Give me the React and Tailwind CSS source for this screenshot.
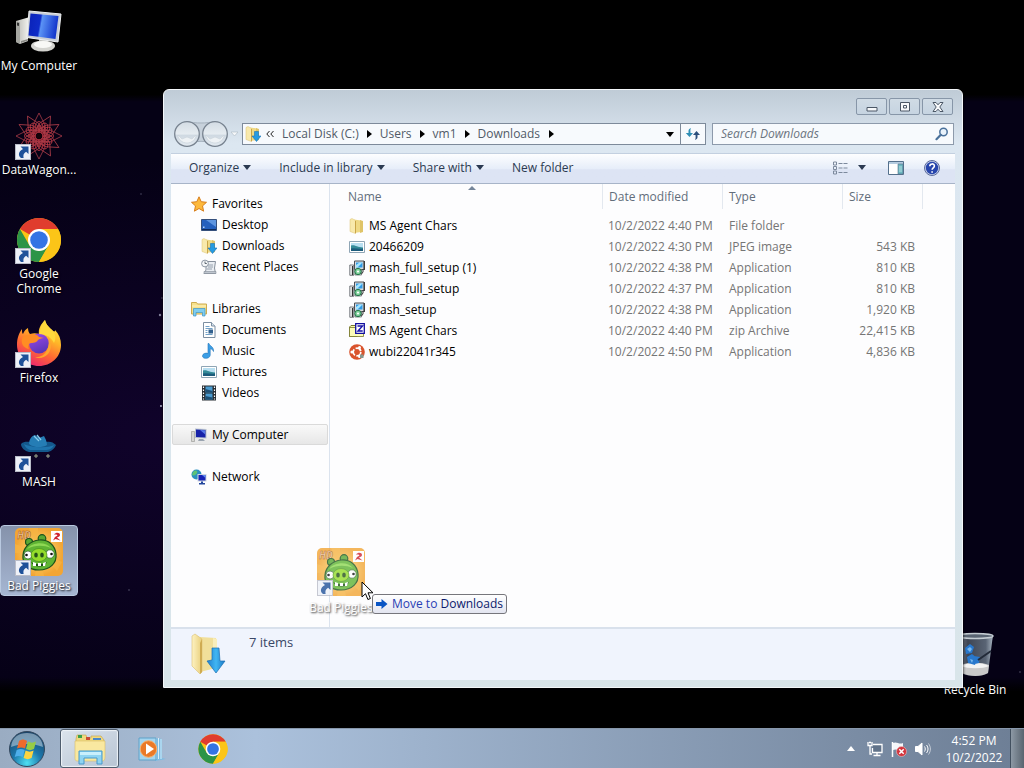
import React from "react";

const svgBase = { "aria-hidden": true, focusable: "false" };

/* ---------- Shared icon parts ---------- */

function ShortcutArrow() {
  return (
    <svg {...svgBase} viewBox="0 0 16 16" className="absolute bottom-0 left-0 h-4 w-4">
      <rect x="0.5" y="0.5" width="15" height="15" fill="#eef1f8" stroke="#b9bcc8" />
      <path d="M5.500 2.500h8V10l-2.400-2.200C8.600 9.300 8 11.200 8.600 14H6C2.800 11.500 3.300 7 8 4.900Z" fill="#1f5199" />
    </svg>
  );
}

function ChromeLogo({ className }) {
  return (
    <svg {...svgBase} viewBox="0 0 48 48" className={className}>
      <circle cx="24" cy="24" r="22" fill="#f9c416" />
      <path d="M24 24 4.950 13A22 22 0 0 1 43.050 13H24Z" fill="#e03c2e" />
      <path d="M4.950 13A22 22 0 0 0 24 46L33.500 29.500 24 35 14.500 29.500Z" fill="#2c9447" />
      <path d="M24 46A22 22 0 0 0 43.050 13H24L33.500 29.500Z" fill="#fbc518" />
      <circle cx="24" cy="24" r="11" fill="#fff" />
      <circle cx="24" cy="24" r="8.800" fill="#3474e4" />
    </svg>
  );
}

function ComputerIcon({ className }) {
  return (
    <svg {...svgBase} viewBox="0 0 48 48" className={className}>
      <defs>
        <linearGradient id="screenBlue" x1="0" y1="0" x2="1" y2="0.150">
          <stop offset="0" stopColor="#0a22b8" />
          <stop offset="0.420" stopColor="#0f2cc8" />
          <stop offset="0.480" stopColor="#5b93f5" />
          <stop offset="1" stopColor="#1437cc" />
        </linearGradient>
        <linearGradient id="caseGrey">
          <stop offset="0" stopColor="#b9b9b4" />
          <stop offset="1" stopColor="#efefeb" />
        </linearGradient>
      </defs>
      <path d="M1 13 13 9.500V33L5 36 1 34Z" fill="url(#caseGrey)" />
      <path d="M1 13 5 14.500V36L1 34Z" fill="#a5a6a1" />
      <path d="M2 14.500l2 .5v3l-2-.5z" fill="#333" />
      <path d="M6 33l7-2v1.500l-7 2.500z" fill="#8a8b86" />
      <path d="M24 31h8l1 6h-9z" fill="#b9bab6" />
      <ellipse cx="28" cy="38" rx="12" ry="5.500" fill="#d4d4d0" />
      <ellipse cx="28" cy="36.500" rx="9" ry="3.500" fill="#f8f8f6" />
      <path d="M14 3 46 6 43 34 12 29.500Z" fill="#c9ced6" stroke="#eef0f2" />
      <path d="M15.500 5.500 43.500 8 40.500 31 13.500 27.500Z" fill="url(#screenBlue)" />
    </svg>
  );
}

function SpiroIcon({ className }) {
  const turns = Array.from({ length: 12 }, (_, i) => i * 30);
  return (
    <svg {...svgBase} viewBox="0 0 48 48" className={className}>
      <g fill="none" stroke="#a83a47" strokeWidth="0.800">
        {turns.map((a) => (
          <g key={a} transform={`rotate(${a} 24 24)`}>
            <path d="M24 1 30.500 14 13 23.500" />
            <path d="M24 1 17.500 14 35 23.500" />
            <ellipse cx="24" cy="15" rx="3.800" ry="5.500" stroke="#c53a46" />
            <path d="M24 12c4 4 3 8-1 7s-3-5 2-5" stroke="#8c2632" />
          </g>
        ))}
      </g>
      <circle cx="24" cy="24" r="3" fill="#120208" />
    </svg>
  );
}

function FirefoxIcon({ className }) {
  return (
    <svg {...svgBase} viewBox="0 0 48 48" className={className}>
      <defs>
        <linearGradient id="foxBody" x1="0.800" y1="0" x2="0.300" y2="1">
          <stop offset="0" stopColor="#fff04a" />
          <stop offset="0.350" stopColor="#ffb728" />
          <stop offset="0.650" stopColor="#ff6a32" />
          <stop offset="1" stopColor="#ec2270" />
        </linearGradient>
        <linearGradient id="foxGlobe" x1="0.300" y1="0" x2="0.700" y2="1">
          <stop offset="0" stopColor="#9a48e8" />
          <stop offset="1" stopColor="#5635b3" />
        </linearGradient>
      </defs>
      <path d="M30 0c1 5 5 8 8 11 2 1 2 0 2-1 4 4 6 9 6 15 0 12-10 21-22 21S2 37 2 25C2 18 4 13 7 9c0 3 0 4 1 5 1-3 3-5 5-6 0 3 1 5 2 6 3-1 6-1 9 0C23 9 26 4 30 0Z" fill="url(#foxBody)" />
      <circle cx="24" cy="23.500" r="10" fill="url(#foxGlobe)" />
      <path d="M24 14c2-8 4-11 6-14 1 5 5 8 8 11 3 4 3 8 1 12-2-5-8-9-15-9Z" fill="#ffd93c" />
      <path d="M12 15c5-2 10-1 12 2l5 1c-3 0-5 1-6 2-2 4-7 2-9 4-1 2-1 3 0 5-6-1-8-6-7-10 1-3 3-3 5-4Z" fill="#ff8d24" />
      <path d="M33 16c4 5 4 13 0 18-4 4-9 5-13 3 10 1 16-9 13-21Z" fill="#ffa52e" />
    </svg>
  );
}

function HatIcon({ className }) {
  return (
    <svg {...svgBase} viewBox="0 0 48 48" className={className}>
      <path d="M6 20c3-3 7-2 9-2h16c4-1 7 0 10 3-1 3-4 6-8 7H14c-4-1-8-4-8-8Z" fill="#14588c" />
      <path d="M9 20c5 3 23 5 30 1-2 4-5 5-9 5H15c-3-1-5-3-6-6Z" fill="#1f75ae" />
      <path d="M14 20c0-4 2-8 6-9l4 3 5-2c1 2 3 5 3 9-5 3-13 3-18-1Z" fill="#257db5" />
      <path d="M19 12l5 5M22 11l4 5" stroke="#8accea" strokeWidth="1.300" />
      <path d="M21 30v4M33 30v4M19 32h4M31 32h4" stroke="#9da88e" strokeWidth="1" />
    </svg>
  );
}

function PigIcon({ className }) {
  return (
    <svg {...svgBase} viewBox="0 0 48 48" className={className}>
      <defs>
        <radialGradient id="pigBack">
          <stop offset="0" stopColor="#ffe282" />
          <stop offset="1" stopColor="#f2a534" />
        </radialGradient>
      </defs>
      <rect width="48" height="48" rx="5" fill="url(#pigBack)" />
      <path d="M24 24 0 16v9zM24 24 14 0h9zM24 24 47 34l-5 9zM24 24 29 48h-9z" fill="#f7b545" opacity="0.700" />
      <text x="2" y="11" fontSize="10" fontWeight="700" fontStyle="italic" fill="#f6cfa0" stroke="#9a5520" strokeWidth="0.500">HD</text>
      <g stroke="#1c531c" strokeWidth="1.200">
        <circle cx="14" cy="14" r="3.500" fill="#59a832" />
        <circle cx="27" cy="10.500" r="3.800" fill="#59a832" />
        <path d="M24 12c9-1 16 5 17 14 1 9-6 16-17 16S7 35 8 27c1-9 8-14 16-15Z" fill="#5fb434" />
      </g>
      <path d="M12 21c5-7 19-8 24-1-8-3-16-3-24 1Z" fill="#8ed854" />
      <circle cx="13" cy="27" r="4" fill="#fff" stroke="#285c20" strokeWidth="0.700" />
      <circle cx="35" cy="26" r="4.200" fill="#fff" stroke="#285c20" strokeWidth="0.700" />
      <circle cx="11.500" cy="27" r="1.300" fill="#111" />
      <circle cx="36.500" cy="26" r="1.300" fill="#111" />
      <ellipse cx="24" cy="27" rx="8" ry="6.500" fill="#93dc2a" stroke="#4b8f20" strokeWidth="0.700" />
      <ellipse cx="21" cy="27" rx="1.800" ry="2.600" fill="#24501a" />
      <ellipse cx="27" cy="27" rx="1.800" ry="2.600" fill="#24501a" />
      <path d="M16 34c5 3 11 3 16 0-2 6-13 6-16 0Z" fill="#1c4a18" />
      <path d="m18 34 3 1v3h-3zm5 1h3v3h-3zm5 0 3-1-1 4h-2z" fill="#fff" />
      <rect x="36" y="3" width="11" height="11" fill="#fff" />
      <path d="M39 6.500C41 4 45 4.500 45 7c0 1.500-2 2-3 2.500l3.500 3-5-1.500-2.500 1.500 2-3.500 2.500-1.500-1-1z" fill="#cf2530" />
    </svg>
  );
}

function RecycleIcon({ className }) {
  return (
    <svg {...svgBase} viewBox="0 0 48 48" className={className}>
      <defs>
        <linearGradient id="binSide">
          <stop offset="0" stopColor="#8d97a5" />
          <stop offset="0.300" stopColor="#3e4553" />
          <stop offset="0.800" stopColor="#596474" />
          <stop offset="1" stopColor="#a8b4c0" />
        </linearGradient>
      </defs>
      <path d="M6 3h36l-5 38c-7 4-20 4-27 0Z" fill="url(#binSide)" />
      <path d="M10 33c7-3 21-3 28 0l-1 8c-6 4-19 4-26 0Z" fill="#c9c9c9" />
      <path d="M10 34c7-4 21-4 28 0-6 3-21 3-28 0Z" fill="#f3f3f3" />
      <path d="m14 16 5-4 4 3-2 6-6 1zM16 25l5-3 5 4-2 7-7-2zM23 24l6 1-1 6-4 1z" fill="#2878cd" />
      <path d="m16 17 3-2 2 2-2 3zM19 27l3 1-1 3z" fill="#7ab9ee" />
      <path d="M40 19 27 28" stroke="#232b39" strokeWidth="2" />
      <ellipse cx="24" cy="4" rx="18" ry="2.500" fill="#5a6573" stroke="#c4ccd2" strokeWidth="1.500" />
    </svg>
  );
}

/* ---------- 16px icons ---------- */

function FolderArt() {
  return (
    <>
      <path d="M5 1.500 12 2.500V14l-7 1Z" fill="#efd985" />
      <path d="M11 2l3 1v11l-3 1z" fill="#dfc468" />
      <path d="M1 1.500 3 .5 6.500 2.500V15.500L1 13.500Z" fill="#f8e9ac" stroke="#dcc273" strokeWidth="0.500" />
      <path d="M6 3h1v12L6 15.500z" fill="#c9a548" />
    </>
  );
}

function DownArrowArt() {
  return <path d="M9.500 5.500h4V10H16l-4.500 5.500L7 10h2.500Z" fill="#269be2" stroke="#1973b5" strokeWidth="0.600" />;
}

function MonitorArt() {
  return (
    <>
      <path d="M.5 4.500h3v10h-3z" fill="#d8d8d4" stroke="#92928e" strokeWidth="0.600" />
      <path d="M4 1.500 15.500 2v9.500L4 11Z" fill="#bac4d0" />
      <path d="M5 2.500 14.500 3v7.500L5 10Z" fill="#1722a8" />
      <path d="M9 3 14 3.300v4z" fill="#5778e8" />
      <path d="M8 12h4l2 2H7z" fill="#9aa4b0" />
    </>
  );
}

function InstallerArt() {
  return (
    <>
      <path d="M5.500 1h9.500v8.500H5.500z" fill="#d9dcde" stroke="#4b5056" />
      <path d="M7 2.500h6.500v5H7z" fill="#2f9ae6" />
      <path d="m7 5 3.500-2.500h3L8.500 7.500H7z" fill="#a3e6ff" />
      <path d="M.8 5h4v10.300h-4z" fill="#f1f3f3" stroke="#565b60" strokeWidth="0.800" />
      <path d="M3.500 6v9" stroke="#333" strokeWidth="1.200" />
      <path d="M6 9.500h6.500v5.500H6z" fill="#dfe3e3" stroke="#565b60" strokeWidth="0.700" />
      <circle cx="9" cy="11.500" r="3.200" fill="#7fd09a" stroke="#24774a" />
      <circle cx="9" cy="11.500" r="1.100" fill="#fff" />
      <path d="M14 9.500v2.500l-1.500 2" stroke="#333" fill="none" />
      <path d="M15.300 1v9" stroke="#222" />
    </>
  );
}

function PictureArt() {
  return (
    <>
      <path d="M.5 2.500h15v11H.5z" fill="#fff" stroke="#8fa5b5" />
      <path d="M2 4h12v8H2z" fill="#b9dff1" />
      <path d="M2 6.500c4-1 6 2 12 2v3.500H2z" fill="#348b98" />
      <path d="M2 9.500c4-1 8 1 12 0v2.500H2z" fill="#1c5c7c" />
    </>
  );
}

const smallArt = {
  star: (
    <path d="m8 .8 2.200 4.900 5.300.6-4 3.600 1.100 5.300L8 12.500l-4.600 2.700 1.100-5.300-4-3.600 5.300-.6Z" fill="#fdb93c" stroke="#d77e1c" />
  ),
  desktop: (
    <>
      <path d="M.5 2.500h15v11H.5z" fill="#2460bd" stroke="#35507c" />
      <path d="M5 3h10v7z" fill="#5e95df" />
      <path d="M1 12h14v1H1z" fill="#0f2c5c" />
      <path d="M2 9.500h1.500v1.500H2z" fill="#b6d2f5" />
    </>
  ),
  folder: <FolderArt />,
  downloads: (
    <>
      <FolderArt />
      <DownArrowArt />
    </>
  ),
  recent: (
    <>
      <path d="M5 2.500h9.500L13.500 9l1 5.500H3L5 11Z" fill="#e9edf2" stroke="#87909c" />
      <path d="M7 6h5M7 8h5M6 10h5" stroke="#98a2ae" />
      <circle cx="4" cy="4.500" r="3.400" fill="#f5f7f9" stroke="#8c96a2" />
      <path d="M4 2.500v2h1.800" stroke="#5c6772" fill="none" />
      <path d="M3 12.500h12v2H3z" fill="#bfc6cf" stroke="#848d99" strokeWidth="0.600" />
    </>
  ),
  libraries: (
    <>
      <path d="M.5 1.500h5l1 1.500h9v10H.5z" fill="#f6e18c" stroke="#cdab50" />
      <path d="M1 5h14" stroke="#fff3bf" />
      <path d="M2.500 7.500h11.500v7.500h-2.500v-3.500H5V15H2.500z" fill="#7fcdf0" stroke="#3d93c6" strokeWidth="0.700" />
    </>
  ),
  documents: (
    <>
      <path d="M2.500.5h8l3.500 3.500v11.500H2.500z" fill="#fff" stroke="#7c8ea1" />
      <path d="M10.500.5V4H14" fill="#d8e4ef" stroke="#7c8ea1" />
      <path d="M4.500 4.500h4M4.500 6.500h7M4.500 8.500h2M4.500 10.500h2M4.500 12.500h7" stroke="#71a0c7" />
      <path d="M7.500 7.500h4.500v4H7.500z" fill="#32618f" />
    </>
  ),
  music: (
    <path d="M8 .5c1 3 5 3 4.500 8-.7-2-2-2.500-3.300-2.700V12c0 4-7.700 4.500-7.700 1 0-2.500 3.500-3.500 5.500-2.500V.5Z" fill="#3c9fe6" stroke="#2273b8" strokeWidth="0.600" />
  ),
  pictures: <PictureArt />,
  videos: (
    <>
      <path d="M1 .5h14v15H1z" fill="#272d33" />
      <path d="M4.500 1.500h7v6h-7zM4.500 8.500h7v6h-7z" fill="#4b9bd0" />
      <path d="m4.500 4 7 2v1.500h-7zM4.500 11l7 1.500v2h-7z" fill="#1d4f74" />
      <path d="M2.500 1.500v13M13.500 1.500v13" stroke="#fff" strokeWidth="1.200" strokeDasharray="1.500 1.500" />
    </>
  ),
  computer: <MonitorArt />,
  network: (
    <>
      <circle cx="5.500" cy="5.500" r="5" fill="#2a8fc0" />
      <path d="M2 3c3-3 5-1 4 1S3 7 1 6zM7 7l3-2v4l-3 2z" fill="#5cc275" />
      <path d="M6.500 5h9v7.500h-9z" fill="#cdd5e0" />
      <path d="M7.500 6h7v5.500h-7z" fill="#1722b5" />
      <path d="m11 6 3.500 0v3z" fill="#5f88ef" />
      <path d="M10 12.500h2V14h2v1.500H8V14h2z" fill="#22469c" />
    </>
  ),
  installer: <InstallerArt />,
  zip: (
    <>
      <path d="M.5 4 2 2.500h4.500L8 4v9.500H.5z" fill="#fbfba6" stroke="#77772e" />
      <path d="M.5 4.500h14v9H.5z" fill="#fbfbb8" stroke="#77772e" strokeWidth="0.800" />
      <path d="M6.700.7h8.600v9.600H6.700z" fill="#fff" stroke="#120fa0" strokeWidth="1.300" />
      <path d="M8.500 3h5l-4.500 5h4.700" fill="none" stroke="#1712a8" strokeWidth="1.400" />
    </>
  ),
  ubuntu: (
    <>
      <circle cx="8" cy="8" r="7.800" fill="#d9532c" />
      <circle cx="8" cy="8" r="3.800" fill="none" stroke="#fff" strokeWidth="1.700" strokeDasharray="6.500 1.500" />
      <circle cx="2.900" cy="8" r="1.500" fill="#fff" />
      <circle cx="10.500" cy="3.500" r="1.500" fill="#fff" />
      <circle cx="10.500" cy="12.500" r="1.500" fill="#fff" />
      <path d="M11 10.500h3.500v3.500H11z" fill="#87988f" />
    </>
  ),
};

function SmallIcon({ name }) {
  return (
    <svg {...svgBase} viewBox="0 0 16 16" className="h-4 w-4 shrink-0">
      {smallArt[name]}
    </svg>
  );
}

function DownCaret({ className = "" }) {
  return (
    <svg {...svgBase} viewBox="0 0 8 5" className={`h-[5px] w-2 shrink-0 ${className}`}>
      <path d="M0 0h8L4 5Z" fill="currentColor" />
    </svg>
  );
}

function RightCaret() {
  return (
    <svg {...svgBase} viewBox="0 0 5 8" className="h-2 w-[5px] shrink-0 text-black">
      <path d="M0 0v8l5-4Z" fill="currentColor" />
    </svg>
  );
}

/* ---------- Desktop ---------- */

const shortcuts = [
  { label: "My Computer", Icon: ComputerIcon },
  { label: "DataWagon...", Icon: SpiroIcon, link: true },
  { label: "Google Chrome", Icon: ChromeLogo, link: true },
  { label: "Firefox", Icon: FirefoxIcon, link: true },
  { label: "MASH", Icon: HatIcon, link: true },
  { label: "Bad Piggies", Icon: PigIcon, link: true, selected: true },
];

function DesktopIcon({ label, Icon, link, selected }) {
  return (
    <button
      type="button"
      className={`flex w-[78px] flex-col items-center rounded-sm border pt-0.5 pb-0.5 text-white ${
        selected ? "border-[#b9c9e0] bg-linear-to-b from-[#8592ab] to-[#a6b6d2]" : "border-transparent"
      }`}
    >
      <span className="relative block">
        <Icon className="h-12 w-12" />
        {link && <ShortcutArrow />}
      </span>
      <span className="mt-0.5 text-center leading-[15px] whitespace-nowrap [text-shadow:1px_1px_2px_#000]">
        {label === "Google Chrome" ? <>Google<br />Chrome</> : label}
      </span>
    </button>
  );
}

const stars = [
  [160, 315, 1.2, 0.6],
  [161, 406, 1, 0.9],
  [162, 298, 0.8, 0.4],
  [129, 590, 0.8, 0.4],
  [141, 194, 0.8, 0.35],
  [1020, 672, 0.8, 0.4],
];

function Stars() {
  return (
    <svg {...svgBase} className="pointer-events-none absolute inset-0 h-full w-full">
      {stars.map(([x, y, r, o]) => (
        <circle key={`${x}-${y}`} cx={x} cy={y} r={r} fill="#cfd4ea" opacity={o} />
      ))}
    </svg>
  );
}

/* ---------- Explorer window ---------- */

function CaptionButton({ label, children }) {
  return (
    <button
      type="button"
      aria-label={label}
      className="flex h-[17px] w-[31px] items-center justify-center rounded-[2px] border border-[#8796a8] bg-linear-to-b from-[#d0dbe5] to-[#c6d4e1]"
    >
      <svg {...svgBase} viewBox="0 0 12 10" className="h-2.5 w-3" fill="#f7f9fb" stroke="#4b5766">
        {children}
      </svg>
    </button>
  );
}

function NavCircles() {
  return (
    <svg {...svgBase} viewBox="0 0 64 28" className="h-7 w-16 shrink-0">
      <defs>
        <linearGradient id="navDisc" x1="0" y1="0" x2="0" y2="1">
          <stop offset="0" stopColor="#d3dce4" />
          <stop offset="0.500" stopColor="#e6ecf1" />
          <stop offset="0.550" stopColor="#cfd9e2" />
          <stop offset="1" stopColor="#e3eaf1" />
        </linearGradient>
      </defs>
      <path d="M13 1.500c8 2 20 2 28 0v25c-8-7-20-7-28 0Z" fill="#c7d1db" stroke="#a4b0bc" />
      <circle cx="13" cy="14" r="12.300" fill="url(#navDisc)" stroke="#77828f" strokeWidth="1.300" />
      <circle cx="41" cy="14" r="12.300" fill="url(#navDisc)" stroke="#77828f" strokeWidth="1.300" />
      <path d="M4 15l4 4 5-2 5 2 4-4c0 4-4 8-9 8s-9-4-9-8ZM32 15l4 4 5-2 5 2 4-4c0 4-4 8-9 8s-9-4-9-8Z" fill="#eef2f5" stroke="#c3ccd5" strokeWidth="0.500" />
      <path d="M57 12h7l-3.500 4Z" fill="#f6f8fa" stroke="#adb8c4" strokeWidth="0.600" />
    </svg>
  );
}

const crumbs = ["Local Disk (C:)", "Users", "vm1", "Downloads"];

function AddressRow() {
  return (
    <div className="flex items-center pr-px">
      <div className="flex h-7 shrink-0 items-center pl-[3px]">
        <NavCircles />
      </div>
      <div className="ml-1 flex h-[22px] min-w-0 flex-1 items-center border border-[#7d8a9a] bg-[#f7fafd] text-[#515b67]">
        <nav aria-label="Address" className="flex min-w-0 flex-1 items-center pl-0.5">
          <SmallIcon name="downloads" />
          <button type="button" aria-label="Parent folders" className="mr-2 ml-[5px]">
            <svg {...svgBase} viewBox="0 0 8 6" className="h-1.5 w-2" fill="none" stroke="#222">
              <path d="M3.500 0 .8 3l2.700 3M7.500 0 4.800 3l2.700 3" />
            </svg>
          </button>
          {crumbs.map((c) => (
            <span key={c} className="flex items-center">
              <button type="button" className="mr-[7px] whitespace-nowrap">
                {c}
              </button>
              <span className="mr-1.5 flex w-2 items-center justify-center">
                <RightCaret />
              </span>
            </span>
          ))}
        </nav>
        <button type="button" aria-label="Recent addresses" className="flex h-full w-5 items-center justify-center text-black">
          <DownCaret />
        </button>
        <button type="button" aria-label="Refresh" className="flex h-full w-[25px] items-center justify-center border-l border-[#7d8a9a]">
          <svg {...svgBase} viewBox="0 0 16 14" className="h-3.5 w-4">
            <path d="M6 1C3 2 3.500 4 3.500 6H.8L4.500 10 8 6H5.500C5.500 4 5 3 6 1Z" fill="#2f8fb5" />
            <path d="M10 13c3-1 2.500-3 2.500-5H15l-3.500-4L8 8h2.500c0 2 .5 3-.5 5Z" fill="#2c4f7c" />
          </svg>
        </button>
      </div>
      <div className="ml-1.5 flex h-[22px] w-[242px] items-center border border-[#8d9aab] bg-[#f7fafd] pr-1 pl-2">
        <input
          type="search"
          aria-label="Search Downloads"
          placeholder="Search Downloads"
          className="min-w-0 flex-1 bg-transparent italic outline-none placeholder:text-[#6b7480]"
        />
        <svg {...svgBase} viewBox="0 0 14 14" className="h-3.5 w-3.5 shrink-0" fill="none">
          <circle cx="8.500" cy="5" r="3.700" fill="#e8f2fb" stroke="#4a719b" strokeWidth="1.500" />
          <path d="M5.800 7.800 1.500 12.200" stroke="#4a719b" strokeWidth="2.200" strokeLinecap="round" />
        </svg>
      </div>
    </div>
  );
}

function ToolButton({ children, menu }) {
  return (
    <button type="button" className="flex items-center gap-1 whitespace-nowrap">
      {children}
      {menu && <DownCaret />}
    </button>
  );
}

function Toolbar() {
  return (
    <div
      role="toolbar"
      aria-label="Folder actions"
      className="flex h-[31px] items-center border-t border-b border-t-[#c3d0e0] border-b-[#a7b4c8] bg-linear-to-b from-[#fdfeff] from-0% via-[#e6edf9] via-52% to-[#dde4f4] to-54% pr-[15px] pb-0.5 pl-[18px] text-[#2b3a51]"
    >
      <div className="flex flex-1 gap-7">
        <ToolButton menu>Organize</ToolButton>
        <ToolButton menu>Include in library</ToolButton>
        <ToolButton menu>Share with</ToolButton>
        <ToolButton>New folder</ToolButton>
      </div>
      <button type="button" aria-label="Change your view">
        <svg {...svgBase} viewBox="0 0 16 14" className="h-3.5 w-4" fill="none" stroke="#7c899c">
          <path d="M1.500 1h3v3h-3zM1.500 5.500h3v3h-3zM1.500 10h3v3h-3z" />
          <path d="M6.500 2.500h9M6.500 7h9M6.500 11.500h9" strokeDasharray="4 1" />
        </svg>
      </button>
      <button type="button" aria-label="More view options" className="ml-2.5">
        <DownCaret />
      </button>
      <button type="button" aria-label="Show the preview pane" className="ml-[22px]">
        <svg {...svgBase} viewBox="0 0 16 14" className="h-3.5 w-4">
          <path d="M.5.5h15v13H.5z" fill="#fff" stroke="#54708c" />
          <path d="M1 1h14v2H1z" fill="#b5cce0" />
          <path d="M10 3h5v10h-5z" fill="#6cb7c0" stroke="#54708c" strokeWidth="0.600" />
          <path d="M11 6h3M11 8h3M11 10h3" stroke="#d9f2f3" strokeWidth="0.700" />
        </svg>
      </button>
      <button type="button" aria-label="Get help" className="ml-5">
        <svg {...svgBase} viewBox="0 0 16 16" className="h-4 w-4">
          <circle cx="8" cy="8" r="7.500" fill="#c9d2ea" stroke="#5a6a9b" />
          <circle cx="8" cy="8" r="6.200" fill="#2745ac" />
          <path d="M5.800 6.200c0-3 4.600-3 4.600-.2C10.400 7.800 8.100 7.900 8.100 9.800M8.100 11.200v1.500" fill="none" stroke="#fff" strokeWidth="1.600" />
        </svg>
      </button>
    </div>
  );
}

const places = [
  { name: "Favorites", icon: "star", items: [["Desktop", "desktop"], ["Downloads", "downloads"], ["Recent Places", "recent"]] },
  { name: "Libraries", icon: "libraries", items: [["Documents", "documents"], ["Music", "music"], ["Pictures", "pictures"], ["Videos", "videos"]] },
  { name: "My Computer", icon: "computer", items: [], active: true },
  { name: "Network", icon: "network", items: [] },
];

function Sidebar() {
  return (
    <nav aria-label="Folders" className="flex w-[159px] shrink-0 flex-col gap-[21px] border-r border-[#dbe3ee] px-px pt-[9px] text-black">
      {places.map((p) => (
        <ul key={p.name}>
          <li>
            <a
              href={`#${p.name}`}
              className={`flex h-[21px] items-center gap-[5px] rounded-[2px] border pl-[18px] ${
                p.active ? "border-[#dadada] bg-linear-to-b from-[#f9f9f9] to-[#e7e7e7]" : "border-transparent"
              }`}
            >
              <SmallIcon name={p.icon} />
              {p.name}
            </a>
          </li>
          {p.items.map(([label, icon]) => (
            <li key={label}>
              <a href={`#${label}`} className="flex h-[21px] items-center gap-[5px] pl-[29px]">
                <SmallIcon name={icon} />
                {label}
              </a>
            </li>
          ))}
        </ul>
      ))}
    </nav>
  );
}

const files = [
  ["MS Agent Chars", "folder", "10/2/2022 4:40 PM", "File folder", ""],
  ["20466209", "pictures", "10/2/2022 4:30 PM", "JPEG image", "543 KB"],
  ["mash_full_setup (1)", "installer", "10/2/2022 4:38 PM", "Application", "810 KB"],
  ["mash_full_setup", "installer", "10/2/2022 4:37 PM", "Application", "810 KB"],
  ["mash_setup", "installer", "10/2/2022 4:38 PM", "Application", "1,920 KB"],
  ["MS Agent Chars", "zip", "10/2/2022 4:40 PM", "zip Archive", "22,415 KB"],
  ["wubi22041r345", "ubuntu", "10/2/2022 4:50 PM", "Application", "4,836 KB"],
];

function FileList() {
  const head = "border-r border-[#e3e8ef] pl-1.5 text-left font-normal";
  return (
    <div className="min-w-0 flex-1 pl-3">
      <table className="w-full table-fixed border-separate border-spacing-0 text-[#757575]">
        <colgroup>
          <col />
          <col className="w-[120px]" />
          <col className="w-[120px]" />
          <col className="w-20" />
          <col className="w-8" />
        </colgroup>
        <thead>
          <tr className="h-[25px] text-[#626d7b]">
            <th scope="col" aria-sort="ascending" className={`relative ${head}`}>
              Name
              <svg {...svgBase} viewBox="0 0 8 4" className="absolute top-0.5 left-1/2 h-1 w-2 -translate-x-1/2">
                <path d="M0 4 4 0l4 4Z" fill="#76869a" />
              </svg>
            </th>
            <th scope="col" className={head}>Date modified</th>
            <th scope="col" className={head}>Type</th>
            <th scope="col" className={head}>Size</th>
            <td />
          </tr>
        </thead>
        <tbody>
          <tr className="h-1.5" aria-hidden="true">
            <td colSpan={5} />
          </tr>
          {files.map(([name, icon, date, type, size]) => (
            <tr key={name + icon} className="h-[21px]">
              <td className="pl-[7px]">
                <span className="flex items-center gap-1 whitespace-nowrap text-black">
                  <SmallIcon name={icon} />
                  {name}
                </span>
              </td>
              <td className="pl-[5px] whitespace-nowrap">{date}</td>
              <td className="pl-1.5 whitespace-nowrap">{type}</td>
              <td className="pr-2 text-right whitespace-nowrap">{size}</td>
              <td />
            </tr>
          ))}
        </tbody>
      </table>
    </div>
  );
}

function BigDownloadsIcon() {
  return (
    <svg {...svgBase} viewBox="0 0 40 42" className="h-[42px] w-10 shrink-0">
      <defs>
        <linearGradient id="bigFolder">
          <stop offset="0" stopColor="#fdf2c2" />
          <stop offset="1" stopColor="#e9cf7b" />
        </linearGradient>
        <linearGradient id="bigArrow">
          <stop offset="0" stopColor="#1f7fd0" />
          <stop offset="0.500" stopColor="#41b6f2" />
          <stop offset="1" stopColor="#1a78c6" />
        </linearGradient>
      </defs>
      <path d="M11 4 27 5V35L11 39Z" fill="#f1df9a" />
      <path d="M24 5l4 1v28l-4 2z" fill="#f9eebb" />
      <path d="M3 3 6 1 13 6V39l-2 2-8-8Z" fill="url(#bigFolder)" stroke="#dcc070" strokeWidth="0.600" />
      <path d="M13 6v33l-2 2V10Z" fill="#cfab52" />
      <path d="M23 15h7l1 13h5L27 40 18 28l5-1Z" fill="url(#bigArrow)" stroke="#1b6fb2" strokeWidth="0.700" />
    </svg>
  );
}

function ExplorerWindow() {
  return (
    <section
      aria-label="Downloads"
      className="absolute top-[89px] right-[61px] bottom-10 left-[163px] flex flex-col rounded-t-md border border-[#f4f7fa] bg-linear-to-b from-[#bfcbd6] from-0% via-[#dce7f1] via-9% to-[#d9e5ea] px-[7px] pb-[7px] shadow-[0_0_3px_#000]"
    >
      <header className="flex justify-end gap-0.5 pt-2 pr-0.5 pb-[5px]">
        <CaptionButton label="Minimize">
          <path d="M1 5.500h10v3.500H1z" />
        </CaptionButton>
        <CaptionButton label="Restore">
          <path d="M1.500.5h9v8.500h-9z" />
          <path d="M4.500 3.500h3v2.500h-3z" />
        </CaptionButton>
        <CaptionButton label="Close">
          <path d="M1 .5h3l2 2.300L8 .5h3L7.800 5 11 9.500H8L6 7.200 4 9.500H1L4.200 5Z" />
        </CaptionButton>
      </header>
      <div className="pb-[5px]">
        <AddressRow />
      </div>
      <div className="flex min-h-0 flex-1 flex-col bg-[#fdfdfe]">
        <Toolbar />
        <div className="flex min-h-0 flex-1">
          <Sidebar />
          <FileList />
        </div>
        <footer className="flex h-[53px] gap-5 border-t-2 border-[#d9e1ec] bg-[#f0f4fd] pt-1 pl-[18px] text-[#3a4766]">
          <BigDownloadsIcon />
          <p className="text-[13px] leading-[18px]">7 items</p>
        </footer>
      </div>
    </section>
  );
}

function DragGhost() {
  return (
    <div className="pointer-events-none absolute top-[548px] left-[310px]">
      <div className="flex w-[62px] flex-col items-center opacity-80">
        <span className="relative block">
          <PigIcon className="h-12 w-12" />
          <ShortcutArrow />
        </span>
        <span className="mt-1 leading-[15px] whitespace-nowrap text-white [text-shadow:1px_1px_2px_#000]">Bad Piggies</span>
      </div>
      <svg {...svgBase} viewBox="0 0 13 20" className="absolute top-[33px] left-[51px] h-5 w-[13px]">
        <path d="M1 1v15l3.500-3.300 2.400 5.800 2.500-1-2.400-5.700H12Z" fill="#fff" stroke="#000" />
      </svg>
      <div role="tooltip" className="absolute top-[46px] left-[62px] flex h-5 items-center gap-1 rounded-[3px] border border-[#76767c] bg-linear-to-b from-white to-[#e3e5f0] px-[3px] whitespace-nowrap text-[#0c1a6b]">
        <svg {...svgBase} viewBox="0 0 12 12" className="h-3 w-3">
          <path d="M0 4h5.500V1L11.500 6l-6 5V8H0Z" fill="#0a55c4" />
        </svg>
        <span>
          <span className="text-[#2840b4]">Move to</span> Downloads
        </span>
      </div>
    </div>
  );
}

/* ---------- Taskbar ---------- */

function StartOrb() {
  return (
    <svg {...svgBase} viewBox="0 0 38 38" className="h-[38px] w-[38px]">
      <defs>
        <radialGradient id="orb" cx="0.500" cy="0.900" r="0.900">
          <stop offset="0" stopColor="#4fe0f2" />
          <stop offset="0.450" stopColor="#1c78ac" />
          <stop offset="1" stopColor="#1b4468" />
        </radialGradient>
      </defs>
      <circle cx="19" cy="19" r="17.500" fill="url(#orb)" stroke="#33475d" />
      <path d="M3 17C4 7 11 3 19 3s15 4 16 14c-10-4-22-4-32 0Z" fill="#d7e4ee" opacity="0.500" />
      <path d="M11 11c3-2 5-2 8 0l-2 7.500c-3-1.500-5-1.500-8 0Z" fill="#ee6a2c" />
      <path d="M20 11.500c3 1.500 5 1.500 8 0l-2 7.500c-3 1.500-5 1.500-8 0Z" fill="#97cc46" />
      <path d="M8.700 20c3-1.500 5-1.500 8 0l-2 7c-3-1.500-5-1.500-8 0Z" fill="#4eaeea" />
      <path d="M17.600 20.500c3 1.500 5 1.500 8 0l-2 7.500c-3 1.500-5 1.500-8 0Z" fill="#fdd441" />
    </svg>
  );
}

function ExplorerIcon() {
  return (
    <svg {...svgBase} viewBox="0 0 36 32" className="h-8 w-9">
      <path d="M5 2h9l1 3h4V3h10l3 4v17H4V6Z" fill="#f0d97f" stroke="#c4a149" strokeWidth="0.600" />
      <path d="M6 2h4v3H6z" fill="#3ba04a" />
      <path d="M14 4h4v3h-4z" fill="#cb4a33" />
      <path d="M21 5h8v2h-8z" fill="#4a88c8" />
      <path d="M3 8h30v16c0 2-1 4-2 4H5c-2 0-2-2-2-4Z" fill="#f9e8a0" stroke="#d8bd67" strokeWidth="0.600" />
      <path d="M7 18h23v13h-5v-6H12v6H7Z" fill="#8fd4f1" stroke="#4699cc" />
      <path d="M8 19h21v3H8z" fill="#c9effc" />
    </svg>
  );
}

function MediaIcon() {
  return (
    <svg {...svgBase} viewBox="0 0 30 26" className="h-[26px] w-[30px]">
      <path d="m18 2 7 1v19l4 1-11 2z" fill="#7dbce3" />
      <path d="M19 2v21M21.500 2v21M24 3v20" stroke="#d8effa" />
      <path d="M2 2h17v22H2z" fill="#a4d5ef" stroke="#5fa2c9" />
      <circle cx="11.500" cy="13" r="8.300" fill="#ea7a28" stroke="#f7b26e" />
      <path d="M9 7.500v11l8-5.500Z" fill="#fff" />
    </svg>
  );
}

function Tray() {
  const btn = "flex h-5 items-center justify-center";
  return (
    <div className="flex items-center text-white">
      <button type="button" aria-label="Show hidden icons" className={btn}>
        <svg {...svgBase} viewBox="0 0 8 5" className="h-[5px] w-2"><path d="M0 5 4 0l4 5Z" fill="#fff" /></svg>
      </button>
      <button type="button" aria-label="Network" className={`ml-3 ${btn}`}>
        <svg {...svgBase} viewBox="0 0 16 16" className="h-4 w-4" fill="none" stroke="#fff" strokeWidth="1.300">
          <path d="M6 3.500h9v8H5.500V7" fill="#61738a" />
          <path d="M10 11.500V14M6.500 14.500h7" />
          <path d="M1 1v3.500h4V1M3 4.500V13h2M2 1.500h2" />
        </svg>
      </button>
      <button type="button" aria-label="Action Center" className={`ml-2 ${btn}`}>
        <svg {...svgBase} viewBox="0 0 16 16" className="h-4 w-4">
          <path d="M1.500 1v15" stroke="#fff" strokeWidth="1.500" />
          <path d="M2 2c4-2 6 2 10 0v7c-4 2-6-2-10 0Z" fill="#f5f7fa" />
          <circle cx="10.500" cy="10.500" r="5" fill="#d3353d" stroke="#f2c2c4" strokeWidth="0.600" />
          <path d="m8.300 8.300 4.400 4.400m0-4.400-4.400 4.400" stroke="#fff" strokeWidth="1.500" />
        </svg>
      </button>
      <button type="button" aria-label="Volume" className={`ml-2 ${btn}`}>
        <svg {...svgBase} viewBox="0 0 16 16" className="h-4 w-4" fill="none" stroke="#fff">
          <path d="M.5 5.500h2.500l4-3.500v12l-4-3.500H.500z" fill="#fff" />
          <path d="M9.500 5.500c1 1.500 1 3.500 0 5M11.500 4c2 2.500 2 5.500 0 8" />
          <path d="M13.500 2.500c2.500 3.500 2.500 7.500 0 11" opacity="0.600" />
        </svg>
      </button>
      <button type="button" className="ml-3.5 w-[58px] text-center leading-[17px] whitespace-nowrap">
        <span className="block">4:52 PM</span>
        <span className="block">10/2/2022</span>
      </button>
      <button type="button" aria-label="Show desktop" className="ml-[7px] h-10 w-3.5 border-l border-[#42505f] bg-linear-to-r from-[#8d99a5] to-[#59646f]" />
    </div>
  );
}

function Taskbar() {
  return (
    <footer className="flex h-10 shrink-0 items-center border-t border-[#8797ab] bg-linear-to-r from-[#9aacc2] from-0% via-[#abc1dc] via-25% to-[#6d7e95]">
      <button type="button" aria-label="Start" className="ml-2">
        <StartOrb />
      </button>
      <button
        type="button"
        aria-label="Windows Explorer"
        className="ml-3.5 flex h-[39px] w-[59px] items-center justify-center rounded-[3px] border border-[#4f5d6e] bg-linear-to-br from-[#dbe3ec] to-[#b7c4d3] shadow-[inset_0_0_1px_1px_#eef3f8]"
      >
        <ExplorerIcon />
      </button>
      <button type="button" aria-label="Windows Media Player" className="ml-[18px]">
        <MediaIcon />
      </button>
      <button type="button" aria-label="Google Chrome" className="ml-[30px]">
        <ChromeLogo className="h-8 w-8" />
      </button>
      <div className="flex-1" />
      <Tray />
    </footer>
  );
}

export default function App() {
  return (
    <div className="flex h-screen min-h-[600px] flex-col overflow-hidden bg-black font-['Open_Sans','Noto_Sans',sans-serif] text-[12px] leading-4 select-none">
      <main className="relative flex min-h-0 flex-1 items-stretch justify-between bg-[linear-gradient(#000_13%,transparent_14%,transparent_93%,#000_95%),radial-gradient(ellipse_at_17%_60%,#10032b,#050115_45%)]">
        <Stars />
        <div className="relative grid auto-rows-[104px] content-start items-start pt-[5px]">
          {shortcuts.map((s) => (
            <DesktopIcon key={s.label} {...s} />
          ))}
        </div>
        <div className="flex items-end pr-2.5 pb-7">
          <DesktopIcon label="Recycle Bin" Icon={RecycleIcon} />
        </div>
        <ExplorerWindow />
        <DragGhost />
      </main>
      <Taskbar />
    </div>
  );
}
